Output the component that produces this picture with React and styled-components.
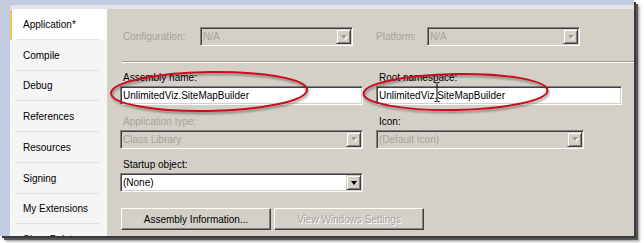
import React from 'react';
import styled, { createGlobalStyle } from 'styled-components';

const Global = createGlobalStyle`
  html, body { margin: 0; padding: 0; background: #fff; }
  body { font-family: "Liberation Sans", Arial, sans-serif; font-size: 10px; }
  #root { width: 644px; height: 243px; }
`;

const Stage = styled.div`
  position: relative;
  width: 644px;
  height: 243px;
  overflow: hidden;
  background: #fff;
`;

const Screen = styled.div`
  width: 634px;
  height: 236px;
  box-sizing: border-box;
  padding: 5px 0 0 10px;
  background: #c2cbdf;
  box-shadow: 2px 2px 0 #3a3a3a, 4px 4px 1px #555, 6px 6px 2px rgba(0, 0, 0, 0.25);
  display: flex;
  flex-direction: column;
  overflow: hidden;
`;

const Page = styled.div`
  flex: 1;
  min-height: 0;
  display: flex;
  background: #e3e4ee;
  padding-top: 4px;
  border-top-left-radius: 4px;
`;

const Tabs = styled.div`
  width: 97px;
  flex: none;
  background: #f5f5f5;
  display: flex;
  flex-direction: column;
  border-top-left-radius: 3px;
  overflow: hidden;
`;

const Tab = styled.div`
  height: 30.75px;
  flex: none;
  position: relative;
  display: flex;
  align-items: center;
  box-sizing: border-box;
  padding-left: ${p => (p.$active ? 11 : 13)}px;
  border-left: ${p => (p.$active ? '2px solid #f2c462' : 'none')};
  background: ${p => (p.$active ? '#fff' : 'transparent')};
  color: #000;
  white-space: nowrap;
  &::after {
    content: '';
    position: absolute;
    left: 5px;
    right: 7px;
    bottom: 0;
    height: 1px;
    background: #e2e2e2;
  }
`;

const Panel = styled.div`
  flex: 1;
  background: #d4d0c8;
  padding: 18px 12px 0 13px;
  display: flex;
  flex-direction: column;
`;

const Grid = styled.div`
  display: grid;
  grid-template-columns: 243px 246px;
  column-gap: 13px;
  row-gap: 10.5px;
`;

const Cell = styled.div`
  display: flex;
  align-items: center;
  height: 19px;
`;

const InlineLabel = styled.span`
  width: ${p => p.$w}px;
  flex: none;
  box-sizing: border-box;
  padding-left: ${p => p.$pad}px;
  color: ${p => (p.$disabled ? '#a5a39c' : '#000')};
`;

const Separator = styled.div`
  height: 0;
  border-top: 1px solid #a09c94;
  border-bottom: 1px solid #fff;
  margin: 15px -12px 9px 2px;
`;

const Field = styled.div`
  display: flex;
  flex-direction: column;
`;

const FieldLabel = styled.div`
  height: 12px;
  line-height: 12px;
  margin-bottom: 2px;
  padding-left: 3px;
  color: ${p => (p.$disabled ? '#a5a39c' : '#000')};
`;

const sunken = `
  box-sizing: border-box;
  border: 1px solid;
  border-color: #808080 #fff #fff #808080;
  box-shadow: inset 1px 1px 0 #404040, inset -1px -1px 0 #d4d0c8;
`;

const TextBox = styled.div`
  ${sunken}
  height: 19px;
  width: ${p => (p.$w ? `${p.$w}px` : '100%')};
  background: #fff;
  display: flex;
  align-items: center;
  padding-left: 2px;
  color: #000;
  white-space: nowrap;
`;

const ComboBox = styled.div`
  ${sunken}
  height: 19px;
  width: ${p => (p.$w ? `${p.$w}px` : '100%')};
  flex: none;
  background: ${p => (p.$disabled ? '#d4d0c8' : '#fff')};
  display: flex;
  align-items: center;
`;

const ComboText = styled.span`
  flex: 1;
  padding-left: 2px;
  white-space: nowrap;
  color: ${p => (p.$disabled ? '#a5a39c' : '#000')};
`;

const ArrowButton = styled.span`
  width: 15px;
  height: 15px;
  margin-right: 1px;
  box-sizing: border-box;
  background: #d4d0c8;
  border: 1px solid;
  border-color: #d4d0c8 #404040 #404040 #d4d0c8;
  box-shadow: inset 1px 1px 0 #fff, inset -1px -1px 0 #808080;
  display: flex;
  align-items: center;
  justify-content: center;
  &::before {
    content: '';
    width: 0;
    height: 0;
    border-left: 3.5px solid transparent;
    border-right: 3.5px solid transparent;
    border-top: 4px solid ${p => (p.$disabled ? '#a09c94' : '#000')};
    ${p => (p.$disabled ? 'filter: drop-shadow(1px 1px 0 #fff);' : '')}
  }
`;

const ButtonRow = styled.div`
  display: flex;
  gap: 3px;
  margin: 16px 0 0 1px;
`;

const Button = styled.div`
  width: 150px;
  height: 22px;
  box-sizing: border-box;
  background: #d4d0c8;
  border: 1px solid;
  border-color: #fff #404040 #404040 #fff;
  box-shadow: inset -1px -1px 0 #808080, inset 1px 1px 0 #d4d0c8;
  display: flex;
  align-items: center;
  justify-content: center;
  color: ${p => (p.$disabled ? '#a5a39c' : '#000')};
  text-shadow: ${p => (p.$disabled ? '1px 1px 0 #fff' : 'none')};
`;

const Overlay = styled.svg`
  position: absolute;
  left: 0;
  top: 0;
  width: 644px;
  height: 243px;
  pointer-events: none;
`;

const Combo = ({ w, disabled, children }) => (
  <ComboBox $w={w} $disabled={disabled}>
    <ComboText $disabled={disabled}>{children}</ComboText>
    <ArrowButton $disabled={disabled} />
  </ComboBox>
);

const tabs = ['Application*', 'Compile', 'Debug', 'References', 'Resources', 'Signing', 'My Extensions', 'SharePoint'];

export default function App() {
  return (
    <Stage>
      <Global />
      <Screen>
        <Page>
          <Tabs>
            {tabs.map((t, i) => (
              <Tab key={t} $active={i === 0}>{t}</Tab>
            ))}
          </Tabs>
          <Panel>
            <Grid>
              <Cell>
                <InlineLabel $w={80} $pad={3} $disabled>Configuration:</InlineLabel>
                <Combo w={153} disabled>N/A</Combo>
              </Cell>
              <Cell>
                <InlineLabel $w={51} $pad={0} $disabled>Platform:</InlineLabel>
                <Combo w={153} disabled>N/A</Combo>
              </Cell>
            </Grid>
            <Separator />
            <Grid>
              <Field>
                <FieldLabel>Assembly name:</FieldLabel>
                <TextBox>UnlimitedViz.SiteMapBuilder</TextBox>
              </Field>
              <Field>
                <FieldLabel>Root namespace:</FieldLabel>
                <TextBox>UnlimitedViz.SiteMapBuilder</TextBox>
              </Field>
              <Field>
                <FieldLabel $disabled>Application type:</FieldLabel>
                <Combo disabled>Class Library</Combo>
              </Field>
              <Field>
                <FieldLabel>Icon:</FieldLabel>
                <Combo w={208} disabled>(Default Icon)</Combo>
              </Field>
              <Field>
                <FieldLabel>Startup object:</FieldLabel>
                <Combo>(None)</Combo>
              </Field>
              <Field />
            </Grid>
            <ButtonRow>
              <Button>Assembly Information...</Button>
              <Button $disabled>View Windows Settings</Button>
            </ButtonRow>
          </Panel>
        </Page>
      </Screen>
      <Overlay viewBox="0 0 644 243">
        <defs>
          <filter id="sh" x="-10%" y="-30%" width="120%" height="160%">
            <feDropShadow dx="1" dy="2" stdDeviation="1.2" floodColor="#000" floodOpacity="0.4" />
          </filter>
        </defs>
        <g filter="url(#sh)" fill="none" stroke="#c8101e" strokeWidth="2">
          <ellipse cx="209" cy="91.5" rx="98" ry="19.5" transform="rotate(-1 209 91.5)" />
          <ellipse cx="455.5" cy="92" rx="92" ry="18" transform="rotate(-1 455.5 92)" />
        </g>
        <g stroke="#000" strokeWidth="1" fill="none">
          <path d="M434.5 82.5 h2 M437.5 82.5 h2 M437 83 v18 M434.5 101.5 h2 M437.5 101.5 h2" />
        </g>
      </Overlay>
    </Stage>
  );
}
